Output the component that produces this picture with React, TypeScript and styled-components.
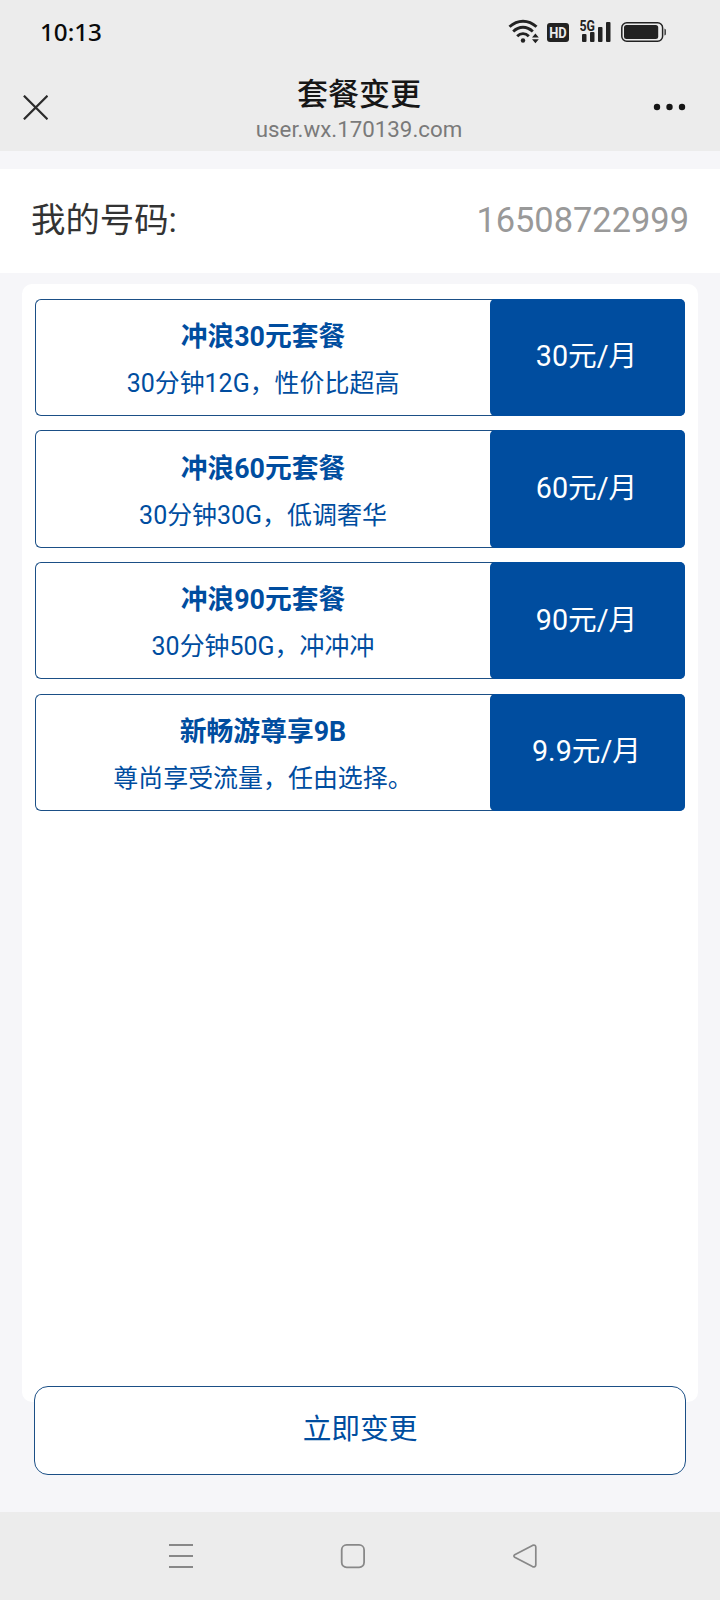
import React from "react";
import styled, { createGlobalStyle } from "styled-components";

const BLUE = "#004d9f";
const LINE = "#1b4f86";

const GlobalStyle = createGlobalStyle`
  *, *::before, *::after { box-sizing: border-box; }
  body {
    margin: 0;
    background: #f6f6f9;
    font-family: Roboto, "Noto Sans CJK SC", sans-serif;
    -webkit-font-smoothing: antialiased;
  }
  h1, h2, p { margin: 0; }
  button { font: inherit; cursor: pointer; }
  svg { display: block; }
`;

const Screen = styled.div`
  display: flex;
  flex-direction: column;
  width: 720px;
  height: 1600px;
  background: #f6f6f9;
  overflow: hidden;
`;

const StatusBar = styled.div`
  display: flex;
  align-items: center;
  justify-content: space-between;
  height: 64px;
  padding: 0 53px 0 40px;
  background: #ececec;
`;

const Clock = styled.time`
  font-family: "Noto Sans", "Open Sans", sans-serif;
  font-size: 24.2px;
  font-weight: 500;
  line-height: 32px;
  color: #0a0a0a;
`;

const StatusIcons = styled.div`
  display: flex;
  align-items: center;
`;

const TitleBar = styled.header`
  display: grid;
  grid-template-columns: 72px 1fr 74px;
  height: 87px;
  background: #ececec;
`;

const BarButton = styled.button<{ $align: "start" | "end" }>`
  display: flex;
  align-items: center;
  justify-content: ${(p) => p.$align};
  padding: 0 ${(p) => (p.$align === "end" ? "34px" : "0")} 1px ${(p) => (p.$align === "start" ? "23px" : "0")};
  border: 0;
  background: none;
`;

const TitleBlock = styled.div`
  display: flex;
  flex-direction: column;
  align-items: center;
  padding-top: 11px;
`;

const PageTitle = styled.h1`
  font-size: 31px;
  font-weight: 500;
  line-height: 40px;
  color: #161616;
`;

const PageHost = styled.p`
  font-size: 22.3px;
  line-height: 28px;
  color: #7a7a7a;
`;

const NumberRow = styled.section`
  display: flex;
  align-items: center;
  justify-content: space-between;
  height: 104px;
  margin-top: 18.4px;
  padding: 0 31px 2px;
  background: #fff;
  font-size: 34.4px;
  line-height: 48px;
`;

const NumberLabel = styled.span`
  color: #333;
`;

const NumberValue = styled.span`
  padding-bottom: 1px;
  color: #999;
`;

const PlanPanel = styled.main`
  display: flex;
  flex-direction: column;
  gap: 14.4px;
  height: 1118px;
  margin: 10.6px 22px 0;
  padding: 14.8px 13px 0;
  border-radius: 10px;
  background: #fff;
`;

const PlanCard = styled.article`
  display: flex;
  height: 117.2px;
  border: 1px solid ${LINE};
  border-right: 0;
  border-radius: 6px;
  background: #fff;
  color: ${BLUE};
`;

const PlanInfo = styled.div`
  flex: 1;
  display: flex;
  flex-direction: column;
  align-items: center;
  padding: 17.5px 0 0;
`;

const PlanName = styled.h2`
  font-size: 26.8px;
  font-weight: 700;
  line-height: 40px;
`;

const PlanNote = styled.p`
  margin-top: 8px;
  font-size: 24.96px;
  line-height: 38px;
`;

const PlanPrice = styled.div`
  display: flex;
  align-items: center;
  justify-content: center;
  width: 195px;
  margin: -1px 0;
  padding: 0 2px 2px 0;
  border-radius: 5px;
  background: ${BLUE};
  color: #fff;
  font-size: 28.7px;
  line-height: 40px;
`;

const SubmitButton = styled.button`
  position: relative;
  display: flex;
  align-items: center;
  justify-content: center;
  flex: none;
  height: 89px;
  margin: -16px 34px 0;
  padding: 0 0 7px;
  border: 1px solid ${LINE};
  border-radius: 14px;
  background: #fff;
  color: ${BLUE};
  font-size: 28.7px;
`;

const NavBar = styled.nav`
  display: flex;
  justify-content: space-between;
  align-items: center;
  height: 88px;
  margin-top: auto;
  padding: 0 182px 0 168px;
  background: #ececec;
`;

const plans = [
  { name: "冲浪30元套餐", note: "30分钟12G，性价比超高", price: "30元/月" },
  { name: "冲浪60元套餐", note: "30分钟30G，低调奢华", price: "60元/月" },
  { name: "冲浪90元套餐", note: "30分钟50G，冲冲冲", price: "90元/月" },
  { name: "新畅游尊享9B", note: "尊尚享受流量，任由选择。", price: "9.9元/月" },
];

const WifiIcon = () => (
  <svg width="32" height="26" viewBox="0 0 32 26" fill="none">
    <g stroke="#222" strokeWidth="2.9">
      <path d="M1.500 7.800C9.500 0.300 20.500 0.300 28.500 7.800" />
      <path d="M5.200 12.500C11.200 6.900 18.800 6.900 24.800 12.500" />
      <path d="M9.200 17.200C12.600 13.700 17.400 13.700 20.800 17.200" />
    </g>
    <circle cx="15" cy="21.500" r="2.200" fill="#222" />
    <path d="M24 18.400L27.400 14.400L30.800 18.400Z M24 20.200H30.800L27.400 24.200Z" fill="#222" />
  </svg>
);

const HdIcon = () => (
  <svg width="22" height="19" viewBox="0 0 22 19">
    <rect width="22" height="19" rx="3" fill="#222" />
    <text x="11" y="15" textAnchor="middle" textLength="17.500" lengthAdjust="spacingAndGlyphs" fontFamily="Roboto" fontSize="15.500" fontWeight="700" fill="#ececec">HD</text>
  </svg>
);

const SignalIcon = () => (
  <svg width="32" height="32" viewBox="0 -4 32 32" fill="#222">
    <text x="-0.500" y="10.800" textLength="15.500" lengthAdjust="spacingAndGlyphs" fontFamily="Roboto" fontSize="14.500" fontWeight="700">5G</text>
    <rect x="2" y="14" width="4.500" height="8" rx="1" />
    <rect x="10" y="12" width="4.500" height="10" rx="1" />
    <rect x="18" y="7" width="4.500" height="15" rx="1" />
    <rect x="26" y="2" width="4.500" height="20" rx="1" />
  </svg>
);

const BatteryIcon = () => (
  <svg width="46" height="20" viewBox="0 0 46 20">
    <rect x="0.800" y="0.800" width="40.800" height="18.400" rx="5" fill="none" stroke="#222" strokeWidth="1.500" />
    <rect x="3" y="3" width="34.200" height="14" rx="2.500" fill="#222" />
    <path d="M43.500 6.500Q44.800 7 44.800 8V12Q44.800 13 43.500 13.500Z" fill="#222" />
  </svg>
);

const CloseIcon = () => (
  <svg width="25" height="25" viewBox="0 0 25 25">
    <path d="M0.900 0.700L24.500 24.300M24.500 0.700L0.900 24.300" stroke="#2b2b2b" strokeWidth="2.200" />
  </svg>
);

const MoreIcon = () => (
  <svg width="34" height="8" viewBox="0 0 34 8" fill="#161616">
    <circle cx="5" cy="4" r="3.200" />
    <circle cx="17.500" cy="4" r="3.200" />
    <circle cx="30" cy="4" r="3.200" />
  </svg>
);

const Gap = styled.span<{ $w: number }>`
  width: ${(p) => p.$w}px;
`;

export default function App() {
  return (
    <>
      <GlobalStyle />
      <Screen>
        <StatusBar>
          <Clock>10:13</Clock>
          <StatusIcons>
            <WifiIcon />
            <Gap $w={7} />
            <HdIcon />
            <Gap $w={11} />
            <SignalIcon />
            <Gap $w={9} />
            <BatteryIcon />
          </StatusIcons>
        </StatusBar>
        <TitleBar>
          <BarButton $align="start" aria-label="关闭"><CloseIcon /></BarButton>
          <TitleBlock>
            <PageTitle>套餐变更</PageTitle>
            <PageHost>user.wx.170139.com</PageHost>
          </TitleBlock>
          <BarButton $align="end" aria-label="更多"><MoreIcon /></BarButton>
        </TitleBar>
        <NumberRow>
          <NumberLabel>我的号码:</NumberLabel>
          <NumberValue>16508722999</NumberValue>
        </NumberRow>
        <PlanPanel>
          {plans.map((plan) => (
            <PlanCard key={plan.name}>
              <PlanInfo>
                <PlanName>{plan.name}</PlanName>
                <PlanNote>{plan.note}</PlanNote>
              </PlanInfo>
              <PlanPrice>{plan.price}</PlanPrice>
            </PlanCard>
          ))}
        </PlanPanel>
        <SubmitButton>立即变更</SubmitButton>
        <NavBar>
          <svg width="26" height="26" viewBox="0 0 26 26" stroke="#888" strokeWidth="2">
            <path d="M1 2H25M1 13H25M1 24H25" />
          </svg>
          <svg width="26" height="26" viewBox="0 0 26 26" fill="none" stroke="#888" strokeWidth="1.800">
            <rect x="1.700" y="1.900" width="22.400" height="22.400" rx="5" />
          </svg>
          <svg width="26" height="26" viewBox="0 0 26 26" fill="none" stroke="#888" strokeWidth="1.700" strokeLinejoin="round">
            <path d="M2.700 11.800L20.500 2.400Q23.300 1.500 23.800 4V22Q23.300 24.500 20.500 23.600L2.700 14.200Q1.100 13 2.700 11.800Z" />
          </svg>
        </NavBar>
      </Screen>
    </>
  );
}
